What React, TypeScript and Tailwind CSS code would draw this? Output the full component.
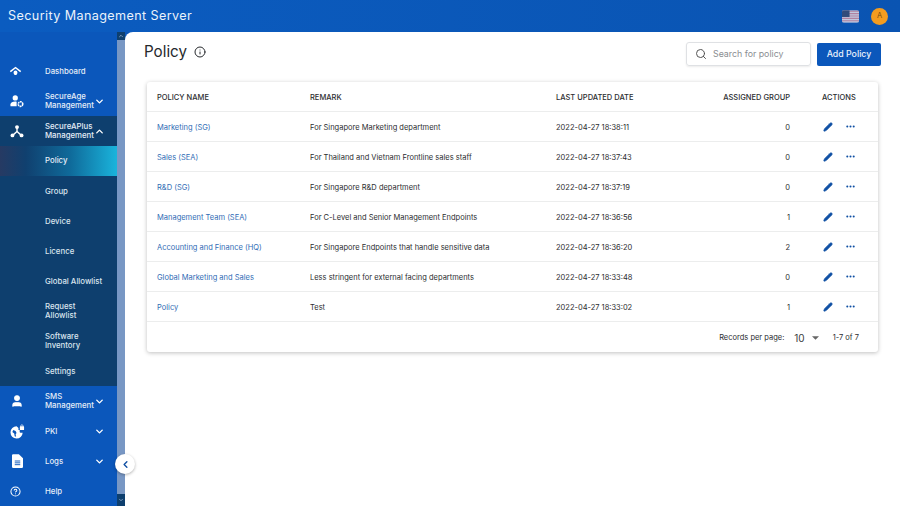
import { ChevronDown, ChevronUp, ChevronLeft, Search, Info, Pencil, Ellipsis, CircleHelp, User } from 'lucide-react';
import type { ReactNode } from 'react';

const policies = [
  { name: 'Marketing (SG)', remark: 'For Singapore Marketing department', date: '2022-04-27 18:38:11', group: 0 },
  { name: 'Sales (SEA)', remark: 'For Thailand and Vietnam Frontline sales staff', date: '2022-04-27 18:37:43', group: 0 },
  { name: 'R&D (SG)', remark: 'For Singapore R&D department', date: '2022-04-27 18:37:19', group: 0 },
  { name: 'Management Team (SEA)', remark: 'For C-Level and Senior Management Endpoints', date: '2022-04-27 18:36:56', group: 1 },
  { name: 'Accounting and Finance (HQ)', remark: 'For Singapore Endpoints that handle sensitive data', date: '2022-04-27 18:36:20', group: 2 },
  { name: 'Global Marketing and Sales', remark: 'Less stringent for external facing departments', date: '2022-04-27 18:33:48', group: 0 },
  { name: 'Policy', remark: 'Test', date: '2022-04-27 18:33:02', group: 1 },
];

const subItems = ['Group', 'Device', 'Licence', 'Global Allowlist', 'Request Allowlist', 'Software Inventory', 'Settings'];

function DashIcon() {
  return (
    <svg viewBox="0 0 16 16" className="w-[13px] h-[13px] ml-[-1px]" fill="currentColor">
      <path d="M8 2 15 7.500l-1.200 1.300L8 4.400 2.200 8.800 1 7.500z" />
      <path d="M8 6.800a2.400 2.400 0 0 1 2.400 2.400c0 1.300-.8 2.300-1.400 3H7c-.6-.7-1.400-1.700-1.400-3A2.400 2.400 0 0 1 8 6.800z" />
    </svg>
  );
}

function UserGearIcon() {
  return (
    <svg viewBox="0 0 16 16" className="w-[14px] h-[14px]" fill="currentColor">
      <circle cx="6" cy="4.500" r="3" />
      <path d="M.5 14v-2c0-2 2.500-3.400 5.500-3.400.6 0 1.100 0 1.600.2V14z" />
      <circle cx="12" cy="11.500" r="2.600" fill="none" stroke="currentColor" strokeWidth="1.800" strokeDasharray="2 .6" />
    </svg>
  );
}

function TreeIcon() {
  return (
    <svg viewBox="0 0 16 16" className="w-[14px] h-[14px]" fill="currentColor" stroke="currentColor">
      <circle cx="8" cy="3.500" r="2.200" strokeWidth="0" />
      <circle cx="2.800" cy="13" r="2.200" strokeWidth="0" />
      <circle cx="13.200" cy="13" r="2.200" strokeWidth="0" />
      <path d="M8 4v4.500M8 8.500 3 13M8 8.500l5 4.500" fill="none" strokeWidth="1.600" />
    </svg>
  );
}

function GlobeLockIcon() {
  return (
    <svg viewBox="0 0 16 16" className="w-[15px] h-[15px]" fill="currentColor">
      <path d="M7 2.500a6.500 6.500 0 1 0 6.500 6.800h-2.200c-.6 0-1-.4-1-1V6.500H9V4.200L7 2.500z" />
      <path d="M3.500 6.500 6 7.500 7 9.500 6 11l.5 2.500-1.500-.5L4.500 10 2.500 8.500z" fill="#0b57bb" />
      <rect x="10.500" y="2.500" width="4.500" height="4" rx=".6" />
      <path d="M11.500 3V2a1.200 1.200 0 0 1 2.400 0v1" fill="none" stroke="currentColor" strokeWidth=".7" />
    </svg>
  );
}

function DocIcon() {
  return (
    <svg viewBox="0 0 12 15" className="w-[11px] h-[14px] ml-[2px]" fill="currentColor">
      <path d="M1.300 0H7.500L12 4.500V13.700A1.300 1.300 0 0 1 10.700 15H1.300A1.300 1.300 0 0 1 0 13.700V1.300A1.300 1.300 0 0 1 1.300 0z" />
      <path d="M3 7.500h6M3 9.500h6M3 11.500h6" stroke="#0b57bb" strokeWidth="1" />
    </svg>
  );
}

function Flag() {
  return (
    <svg viewBox="0 0 18 13" className="w-[17px] h-[13px] rounded-[2px] opacity-80">
      <rect width="18" height="13" fill="#f0e4e8" />
      <path d="M0 1h18M0 3.500h18M0 6h18M0 8.500h18M0 11h18" stroke="#d98d9c" strokeWidth="1.200" />
      <rect width="8" height="7" fill="#3c4a6e" />
    </svg>
  );
}

function NavRow({ icon, label, chevron, dark }: { icon: ReactNode; label: string; chevron?: 'up' | 'down'; dark?: boolean }) {
  return (
    <div className={`h-[30px] flex items-center text-white ${dark ? 'bg-[#0e3f6e]' : ''}`}>
      <div className="w-[45px] pl-[10px] shrink-0 flex items-center">{icon}</div>
      <span className="flex-1 min-w-0 text-[7.800px] leading-[9px] font-medium text-[#e6eef8]">{label}</span>
      {chevron === 'down' && <ChevronDown className="w-[11px] h-[11px] mr-[12px] shrink-0" strokeWidth={3} />}
      {chevron === 'up' && <ChevronUp className="w-[11px] h-[11px] mr-[12px] shrink-0" strokeWidth={3} />}
    </div>
  );
}

export default function App() {
  return (
    <div className="w-[900px] h-[506px] overflow-hidden flex flex-col bg-[#0b57bb] font-['Inter',sans-serif] relative">
      {/* Header */}
      <header className="h-[32px] shrink-0 flex items-center justify-between pl-[8px] pr-[12px] bg-gradient-to-r from-[#0b5cc0] to-[#0a54b2]">
        <h1 className="text-[12.600px] font-normal tracking-[0.4px] text-[#eaf2fb]">Security Management Server</h1>
        <div className="flex items-center gap-[12px]">
          <Flag />
          <div className="w-[17px] h-[17px] rounded-full bg-[#f39c1f] flex items-center justify-center text-[7.500px] text-[#7a4d10]">A</div>
        </div>
      </header>

      <div className="flex-1 flex min-h-0">
        {/* Sidebar */}
        <aside className="w-[117px] shrink-0 pt-[24px] bg-[#0b57bb]">
          <NavRow icon={<DashIcon />} label="Dashboard" />
          <NavRow icon={<UserGearIcon />} label="SecureAge Management" chevron="down" />
          <NavRow icon={<TreeIcon />} label="SecureAPlus Management" chevron="up" dark />
          <div className="bg-[#0e3f6e]">
            <div className="h-[30px] flex items-center pl-[45px] bg-[linear-gradient(90deg,#263a63_0%,#10406f_22%,#0f6a9a_60%,#1ab4dc_100%)] text-[7.800px] font-medium text-[#e6eef8]">Policy</div>
            {subItems.map((item) => (
              <div key={item} className="h-[30px] flex items-center pl-[45px] pr-[10px] text-[7.800px] leading-[9px] font-medium text-[#dbe5ef]">{item}</div>
            ))}
          </div>
          <NavRow icon={<User className="w-[14px] h-[14px]" fill="currentColor" />} label="SMS Management" chevron="down" />
          <NavRow icon={<GlobeLockIcon />} label="PKI" chevron="down" />
          <NavRow icon={<DocIcon />} label="Logs" chevron="down" />
          <NavRow icon={<CircleHelp className="w-[11px] h-[11px]" strokeWidth={2.200} />} label="Help" />
        </aside>

        {/* Scrollbar */}
        <div className="w-[8px] shrink-0 flex flex-col justify-between bg-[#7897c4]">
          <div className="h-[8px] bg-[#0e3f6e] flex items-center justify-center"><ChevronUp className="w-[6px] h-[6px] text-[#9db6d6]" strokeWidth={3} /></div>
          <div className="h-[12px] bg-[#0e3f6e] flex items-center justify-center"><ChevronDown className="w-[6px] h-[6px] text-[#9db6d6]" strokeWidth={3} /></div>
        </div>

        {/* Main */}
        <main className="flex-1 min-w-0 bg-white rounded-tl-[8px] pl-[22px] pr-[19px] pt-[10px]">
          <div className="h-[40px] flex items-start justify-between">
            <div className="flex items-center gap-[7px] -ml-[3px]">
              <h2 className="text-[15.200px] leading-[20px] text-[#26292d]">Policy</h2>
              <Info className="w-[12px] h-[12px] text-[#26292d]" strokeWidth={2} />
            </div>
            <div className="flex items-center gap-[6px]">
              <div className="w-[125px] h-[24px] flex items-center gap-[6px] pl-[8px] border border-[#dfe1e4] rounded-[3px] shadow-[0_1px_2px_rgba(0,0,0,0.08)]">
                <Search className="w-[12px] h-[12px] text-[#555]" strokeWidth={2} />
                <span className="text-[8.800px] text-[#8a8d91]">Search for policy</span>
              </div>
              <button className="w-[64px] h-[23px] bg-[#0b57bb] rounded-[2px] text-[8.800px] font-medium text-[#eaf2fb]">Add Policy</button>
            </div>
          </div>

          {/* Table */}
          <div className="w-[731px] rounded-[3px] shadow-[0_1px_4px_rgba(0,0,0,0.25)] text-[7.500px] text-[#2b2d30]">
            <div className="h-[30px] pt-[2px] grid grid-cols-[153px_246px_128px_106px_1fr] items-center border-b border-[#eceded] pl-[10px] font-medium">
              <span>POLICY NAME</span>
              <span>REMARK</span>
              <span>LAST UPDATED DATE</span>
              <span className="text-right">ASSIGNED GROUP</span>
              <span className="pl-[32px]">ACTIONS</span>
            </div>
            {policies.map((p) => (
              <div key={p.name} className="h-[30px] pt-[2px] grid grid-cols-[153px_246px_128px_106px_1fr] items-center border-b border-[#eceded] pl-[10px]">
                <span className="text-[#2f6cb5]">{p.name}</span>
                <span>{p.remark}</span>
                <span>{p.date}</span>
                <span className="text-right">{p.group}</span>
                <div className="flex items-center gap-[12px] pl-[33px] -mt-[1px] text-[#0f4fa3]">
                  <Pencil className="w-[10px] h-[10px]" fill="currentColor" strokeWidth={2} />
                  <Ellipsis className="w-[11px] h-[11px] -mt-[1px]" strokeWidth={2.500} />
                </div>
              </div>
            ))}
            <div className="h-[30px] pt-[2px] flex items-center justify-end pr-[19px]">
              <span>Records per page:</span>
              <span className="ml-[10px] text-[10px] text-[#3a3c40]">10</span>
              <svg viewBox="0 0 8 4" className="w-[7px] h-[4px] ml-[7px] text-[#666]" fill="currentColor"><path d="M0 0h8L4 4z" /></svg>
              <span className="ml-[14px]">1-7 of 7</span>
            </div>
          </div>
        </main>
      </div>

      {/* Collapse button */}
      <div className="absolute left-[115px] top-[454px] w-[20px] h-[20px] rounded-full bg-white shadow-[0_1px_3px_rgba(0,0,0,0.3)] flex items-center justify-center">
        <ChevronLeft className="w-[11px] h-[11px] text-[#0f4fa3]" strokeWidth={3} />
      </div>
    </div>
  );
}
